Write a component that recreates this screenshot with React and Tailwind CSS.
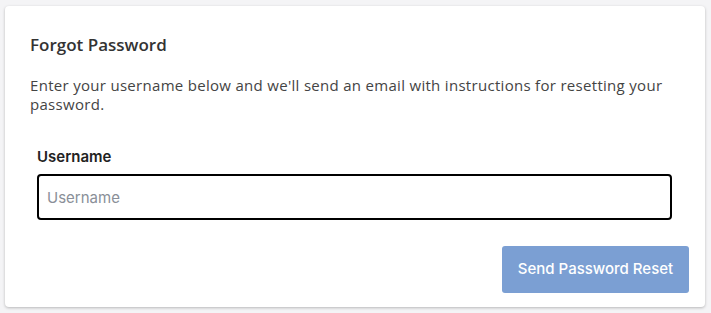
export default function App() {
  return (
    <div className="min-h-[313px] bg-[#f4f4f6] pt-[6px] pl-[5px] pr-[6px] pb-[6px]">
      <div className="bg-white rounded-[4px] shadow-[0_1px_3px_rgba(0,0,0,0.25)] w-[700px] h-[301px] pt-[28px] pr-[16px] pb-[15px]">
        {/* Header */}
        <div className="pl-[25px] pr-[16px] font-['Open_Sans',sans-serif] text-[#333]">
          <h2 className="text-[17px] font-semibold leading-[22px]">Forgot Password</h2>
          <p className="mt-[20px] text-[15px] tracking-[0.3px] leading-[19px] text-[#444]">
            Enter your username below and we'll send an email with instructions for resetting your password.
          </p>
        </div>

        {/* Form */}
        <div className="pl-[32px] pr-[17px] mt-[34px] font-['Inter',sans-serif]">
          <label className="block text-[15px] font-semibold text-[#222] leading-[18px]">Username</label>
          <input
            type="text"
            placeholder="Username"
            className="mt-[8px] block w-full h-[46px] border-2 border-black rounded-[4px] px-[8px] text-[15px] placeholder:text-[#8a8f98] outline-none"
          />
        </div>

        <div className="flex justify-end mt-[26px]">
          <button className="w-[187px] h-[47px] bg-[#7b9fd3] text-white rounded-[3px] text-[15px] font-medium font-['Inter',sans-serif]">
            Send Password Reset
          </button>
        </div>
      </div>
    </div>
  )
}
